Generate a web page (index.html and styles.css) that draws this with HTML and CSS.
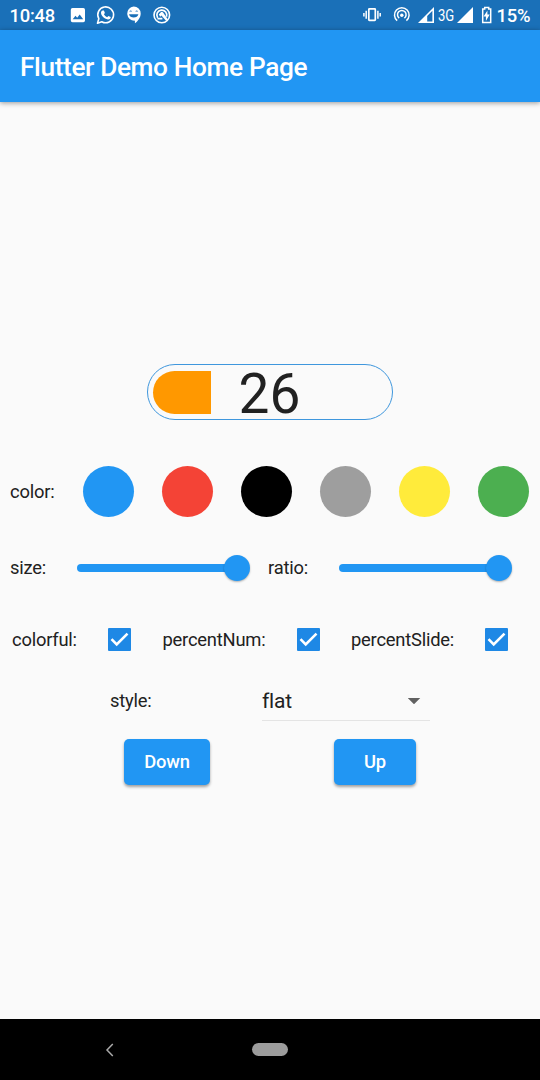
FILE: index.html
```html
<!DOCTYPE html>
<html lang="en">
<head>
<meta charset="utf-8">
<title>Flutter Demo</title>
<link rel="stylesheet" href="styles.css">
</head>
<body>
<div class="screen">
  <header class="status">
    <span class="clock">10:48</span>
    <svg class="status-left" width="104" height="30" viewBox="68 0 104 30">
      <path fill="#fff" fill-rule="evenodd" d="M72.500 8h10.800q1.700 0 1.700 1.700v10.800q0 1.700-1.700 1.700h-10.800q-1.700 0-1.700-1.700V9.700q0-1.700 1.700-1.700zM72.700 19.300h10.500l-3.500-4.800-2.500 3.200-1.700-2z"/>
      <path fill="none" stroke="#fff" stroke-width="1.600" stroke-linejoin="round" d="M97.500 23.200l1.300-4.500a7.900 7.900 0 1 1 3 3z"/>
      <path fill="#fff" d="M102.700 10.500l1.200.1 1 2.400-1 1.300q1 2.100 3.200 3l1.300-1.400 2.300 1.200q.1 2.400-2.800 2.300c-4-.7-7-4.100-6.900-7q.3-1.700 1.700-1.900z"/>
      <path fill="#fff" fill-rule="evenodd" d="M133.700 6.400a7 7 0 0 1 7 7c0 4.200-2.800 7.500-5.800 9.800v-2.600a7.100 7.100 0 1 1-1.200-14.200zM129 14.200q1 3.300 4.700 3.300t4.700-3.300zM129.200 11.500q1.500-2 3 0zM135.200 11.500q1.500-2 3 0z"/>
      <circle cx="161.800" cy="15" r="7.800" fill="none" stroke="#fff" stroke-width="1.600"/>
      <path fill="none" stroke="#fff" stroke-width="1.700" d="M157.600 17.800a5 5 0 1 1 8.900-1M157.400 18.600h5"/>
      <path fill="#fff" d="M158.800 14.500l2.500-2.700 1.600.4 5 7.200-1.600 1.500-4.900-5.300-1.200 1.100z"/>
    </svg>
    <svg class="status-radio" width="74" height="30" viewBox="362 0 74 30">
      <g fill="none" stroke="#fff" stroke-width="1.500">
        <rect x="368.800" y="8.900" width="6.500" height="11.500" rx=".6" stroke-width="1.700"/>
        <path d="M366.200 10.800v8M363.900 13v3.600M377.900 10.800v8M380.200 13v3.600"/>
        <path d="M397.200 20.600a7.300 7.300 0 1 1 9.200 0M399.200 18.100a4.300 4.300 0 1 1 5.200 0"/>
      </g>
      <circle cx="401.800" cy="15.200" r="1.700" fill="#fff"/>
      <path fill="#fff" fill-rule="evenodd" d="M418 23L434 7v16zM427.200 16v5.400h5.200V10.800z"/>
    </svg>
    <span class="network">3G</span>
    <svg class="status-power" width="38" height="30" viewBox="456 0 38 30">
      <path fill="#fff" d="M457 23L473 7v16z"/>
      <path fill="none" stroke="#fff" stroke-width="1.500" d="M482.700 9h2v-1.400h4V9h2v13.400h-8z"/>
      <path fill="#fff" d="M487.400 10.500v4h2.300l-3.800 6.600v-4.700h-2.300z"/>
    </svg>
    <span class="battery">15%</span>
  </header>
  <div class="appbar">Flutter Demo Home Page</div>
  <main class="content">
    <div class="gauge"><div class="gauge-fill"></div><span class="gauge-value">26</span></div>

    <div class="colors">
      <span>color:</span>
      <div class="swatches">
        <i class="swatch blue"></i><i class="swatch red"></i><i class="swatch black"></i><i class="swatch grey"></i><i class="swatch yellow"></i><i class="swatch green"></i>
      </div>
    </div>

    <div class="sliders">
      <span>size:</span>
      <div class="slider"><i class="track"></i><i class="thumb"></i></div>
      <span>ratio:</span>
      <div class="slider"><i class="track"></i><i class="thumb"></i></div>
    </div>

    <div class="checks">
      <span>colorful:</span>
      <svg class="check" viewBox="0 0 23 23"><path d="M3.500 11.200l5.200 5.200L19.500 5.600"/></svg>
      <span>percentNum:</span>
      <svg class="check" viewBox="0 0 23 23"><path d="M3.500 11.200l5.200 5.200L19.500 5.600"/></svg>
      <span>percentSlide:</span>
      <svg class="check" viewBox="0 0 23 23"><path d="M3.500 11.200l5.200 5.200L19.500 5.600"/></svg>
    </div>

    <div class="style-row">
      <span>style:</span>
      <div class="dropdown"><span>flat</span><i class="arrow"></i></div>
    </div>

    <div class="buttons">
      <div class="button down">Down</div>
      <div class="button up">Up</div>
    </div>
  </main>
  <nav class="navbar">
    <svg class="back" width="10" height="14" viewBox="0 0 10 14"><path d="M7.800 1L2 7l5.800 6"/></svg>
    <i class="home"></i>
  </nav>
</div>
</body>
</html>
```
FILE: styles.css
```css
* { box-sizing: border-box; }
body { margin: 0; }
.screen {
  width: 540px;
  height: 1080px;
  display: flex;
  flex-direction: column;
  overflow: hidden;
  background: #fafafa;
  color: #212121;
  font: 400 18.375px/24px Roboto, sans-serif;
  letter-spacing: -.22px;
  white-space: nowrap;
}
.screen i, .screen svg { display: block; flex: none; }

.status {
  height: 30px;
  flex: none;
  display: flex;
  align-items: center;
  padding: 0 10px 0 9.500px;
  background: #1a70b8;
  color: #fff;
  font-weight: 500;
}
.clock { width: 58.500px; padding-top: 2px; flex: none; }
.status-radio { margin-left: 190px; }
.network { width: 20px; flex: none; padding-left: 2px; font-size: 17px; font-weight: 400; letter-spacing: 0; transform: scaleX(.77); transform-origin: 2px 50%; }
.battery { padding: 2px 0 0 2.500px; }

.appbar {
  height: 72px;
  flex: none;
  padding-left: 20px;
  background: #2196f3;
  color: #fff;
  font-size: 26.250px;
  font-weight: 500;
  letter-spacing: -.37px;
  line-height: 74px;
  box-shadow: 0 1px 5px rgba(0, 0, 0, .4);
}

.content { flex: 1; padding-top: 262px; }
.gauge {
  width: 246px;
  height: 56px;
  margin: 0 auto 0 147px;
  padding-left: 5px;
  display: flex;
  align-items: center;
  border: 1px solid #3f97dd;
  border-radius: 28px;
}
.gauge-fill {
  width: 58px;
  height: 43px;
  border-radius: 21.500px 0 0 21.500px;
  background: #ff9800;
}
.gauge-value { margin-left: 27.500px; padding-top: 3px; font-size: 55px; line-height: 50px; letter-spacing: 0; }

.colors {
  height: 51px;
  margin-top: 46px;
  display: flex;
  align-items: center;
  justify-content: space-between;
  padding: 0 10.500px 0 10px;
}
.swatches { width: 447px; display: flex; justify-content: space-between; }
.swatch { width: 51px; height: 51px; border-radius: 50%; }
.blue { background: #2196f3; }
.red { background: #f44336; }
.black { background: #000; }
.grey { background: #9e9e9e; }
.yellow { background: #ffeb3b; }
.green { background: #4caf50; }

.sliders {
  height: 26px;
  margin-top: 38px;
  padding-left: 10px;
  display: grid;
  grid-template-columns: 67px 191px 71px 173px;
  align-items: center;
}
.slider { display: flex; align-items: center; }
.track { width: 152px; height: 8px; border-radius: 4px; background: #2196f3; }
.thumb { width: 26px; height: 26px; margin-left: -5px; border-radius: 50%; background: #2196f3; box-shadow: 0 1px 2px rgba(0, 0, 0, .3); }

.checks {
  height: 24px;
  margin-top: 46.500px;
  padding-left: 12px;
  display: grid;
  grid-template-columns: 96px 54.500px 134px 54.500px 134px 23px;
  align-items: center;
}
.check { width: 23px; height: 23px; border-radius: 1px; background: #1e88e5; }
.check path { fill: none; stroke: #fff; stroke-width: 2.600px; }

.style-row {
  height: 40px;
  margin-top: 29.500px;
  padding-left: 110px;
  display: grid;
  grid-template-columns: 152px 168px;
  align-items: center;
}
.dropdown {
  height: 40px;
  display: flex;
  align-items: center;
  justify-content: space-between;
  padding-right: 9.500px;
  border-bottom: 1px solid #e4e4e4;
  font-size: 21px;
}
.arrow { width: 13px; height: 6.500px; margin-top: 1px; background: #616161; clip-path: polygon(0 0, 100% 0, 50% 100%); }

.buttons { display: flex; gap: 124px; margin-top: 18px; padding-left: 124px; }
.button {
  height: 46px;
  border-radius: 5px;
  background: #2196f3;
  box-shadow: 0 2px 3px rgba(0, 0, 0, .36);
  color: #fff;
  font-weight: 500;
  line-height: 46px;
  text-align: center;
}
.down { width: 86px; }
.up { width: 82px; }

.navbar { height: 61px; flex: none; display: flex; align-items: center; padding-left: 105px; background: #000; }
.back path { fill: none; stroke: #aaa; stroke-width: 1.500px; }
.home { width: 36px; height: 13px; margin-left: 137px; border-radius: 6.500px; background: #9c9c9c; }
```
